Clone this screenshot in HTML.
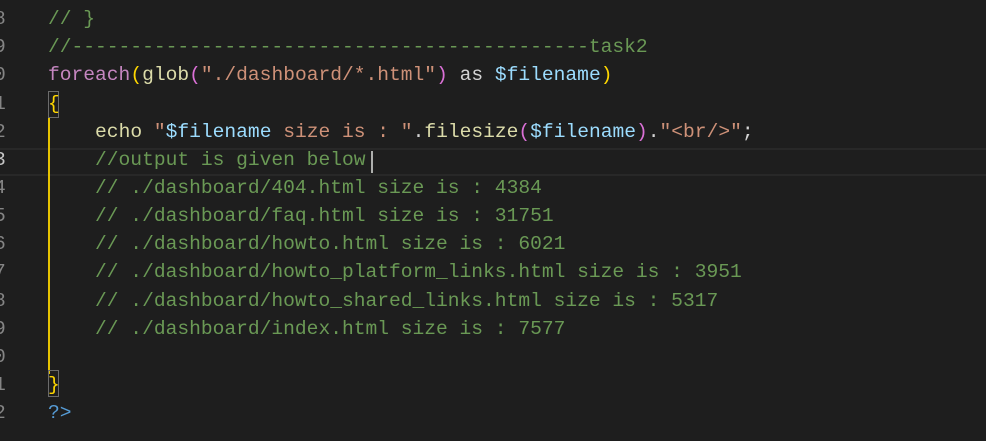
<!DOCTYPE html>
<html><head><meta charset="utf-8"><style>
html,body{margin:0;padding:0;background:#1e1e1e;width:986px;height:441px;overflow:hidden;position:relative}
.l{position:absolute;left:0;height:28.14px;line-height:28.14px;font-family:"Liberation Mono",monospace;font-size:19.6px;white-space:pre;color:#d4d4d4}
.n{position:absolute;left:-6px;width:20px;text-align:left;color:#858585}
.c{position:absolute;left:48px}
.cm{color:#6a9955}.kw{color:#c586c0}.fn{color:#dcdcaa}.st{color:#ce9178}.v{color:#9cdcfe}.y{color:#ffd700}.p{color:#da70d6}.b{color:#569cd6}
</style></head><body>
<div style="position:absolute;left:0;top:148px;width:986px;height:24px;border-top:2px solid #282828;border-bottom:2px solid #282828"></div>
<div style="position:absolute;left:48px;top:118px;width:2px;height:256px;background:#e6c300"></div>
<div style="position:absolute;left:48px;top:91px;width:11px;height:27px;border:1px solid #6b6b6b;box-sizing:border-box"></div>
<div style="position:absolute;left:48px;top:370px;width:11px;height:27px;border:1px solid #6b6b6b;box-sizing:border-box"></div>
<div style="position:absolute;left:371px;top:151px;width:2px;height:22px;background:#aeafad"></div>
<div class="l" style="top:-23px"><span class="n">7</span><span class="c cm">// </span></div>
<div class="l" style="top:5px"><span class="n">8</span><span class="c cm">// }</span></div>
<div class="l" style="top:33px"><span class="n">9</span><span class="c cm">//--------------------------------------------task2</span></div>
<div class="l" style="top:61px"><span class="n">0</span><span class="c"><span class="kw">foreach</span><span class="y">(</span><span class="fn">glob</span><span class="p">(</span><span class="st">"./dashboard/*.html"</span><span class="p">)</span> as <span class="v">$filename</span><span class="y">)</span></span></div>
<div class="l" style="top:90px"><span class="n">1</span><span class="c"><span class="y">{</span></span></div>
<div class="l" style="top:118px"><span class="n">2</span><span class="c">    <span class="fn">echo</span> <span class="st">"</span><span class="v">$filename</span><span class="st"> size is : "</span>.<span class="fn">filesize</span><span class="p">(</span><span class="v">$filename</span><span class="p">)</span>.<span class="st">"&lt;br/&gt;"</span>;</span></div>
<div class="l" style="top:146px"><span class="n" style="color:#c6c6c6">3</span><span class="c cm">    //output is given below</span></div>
<div class="l" style="top:174px"><span class="n">4</span><span class="c cm">    // ./dashboard/404.html size is : 4384</span></div>
<div class="l" style="top:202px"><span class="n">5</span><span class="c cm">    // ./dashboard/faq.html size is : 31751</span></div>
<div class="l" style="top:230px"><span class="n">6</span><span class="c cm">    // ./dashboard/howto.html size is : 6021</span></div>
<div class="l" style="top:258px"><span class="n">7</span><span class="c cm">    // ./dashboard/howto_platform_links.html size is : 3951</span></div>
<div class="l" style="top:287px"><span class="n">8</span><span class="c cm">    // ./dashboard/howto_shared_links.html size is : 5317</span></div>
<div class="l" style="top:315px"><span class="n">9</span><span class="c cm">    // ./dashboard/index.html size is : 7577</span></div>
<div class="l" style="top:343px"><span class="n">0</span></div>
<div class="l" style="top:371px"><span class="n">1</span><span class="c"><span class="y">}</span></span></div>
<div class="l" style="top:399px"><span class="n">2</span><span class="c b">?&gt;</span></div>
</body></html>
